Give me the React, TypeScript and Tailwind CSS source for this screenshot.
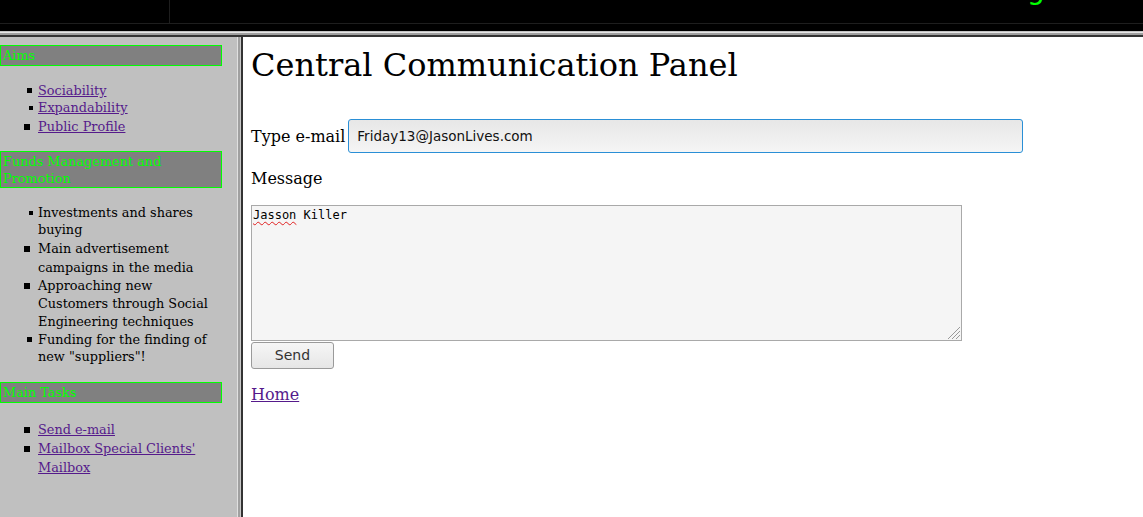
import React from "react";

type Line = { text: string; cls: string };
type Item = { bullet: string; lines: Line[]; link?: boolean };

const L17 = "h-[17px] leading-[17px]";
const L18 = "h-[18px] leading-[18px]";
const L19 = "h-[19px] leading-[19px]";

const B4 = "ml-[29px] w-[4px] h-[4px]";
const B5 = "ml-[27px] w-[5px] h-[5px]";
const B6 = "ml-[24px] w-[6px] h-[6px]";

function List({ items, className }: { items: Item[]; className: string }) {
  return (
    <ul className={className}>
      {items.map((it, i) => (
        <li key={i} className="flex">
          <div className="w-[38px] shrink-0">
            <div className={"flex items-center " + it.lines[0].cls}>
              <span className={"block bg-black " + it.bullet} />
            </div>
          </div>
          <div>
            {it.lines.map((l, j) => (
              <div key={j} className={"whitespace-nowrap " + l.cls}>
                {it.link ? (
                  <a href="#" className="text-[#551a8b] underline">
                    {l.text}
                  </a>
                ) : (
                  <span className="text-black">{l.text}</span>
                )}
              </div>
            ))}
          </div>
        </li>
      ))}
    </ul>
  );
}

function Heading({ lines, cls, extra }: { lines: string[]; cls: string; extra?: string }) {
  return (
    <div
      className={
        "w-[222px] border border-[#00ff00] bg-[#808080] pl-[2px] text-[#00ff00] " + (extra || "")
      }
    >
      {lines.map((l, i) => (
        <div key={i} className={"whitespace-nowrap " + cls}>
          {l}
        </div>
      ))}
    </div>
  );
}

export default function App() {
  const serif = { fontFamily: '"DejaVu Serif", "Liberation Serif", serif' };
  const sans = { fontFamily: '"DejaVu Sans", "Liberation Sans", sans-serif' };
  const mono = { fontFamily: '"DejaVu Sans Mono", "Liberation Mono", monospace' };

  const aims: Item[] = [
    { bullet: B5, lines: [{ text: "Sociability", cls: L17 }], link: true },
    { bullet: B4, lines: [{ text: "Expandability", cls: L18 }], link: true },
    { bullet: B6, lines: [{ text: "Public Profile", cls: L19 }], link: true },
  ];
  const funds: Item[] = [
    {
      bullet: B4,
      lines: [
        { text: "Investments and shares", cls: L17 },
        { text: "buying", cls: L18 },
      ],
    },
    {
      bullet: B6,
      lines: [
        { text: "Main advertisement", cls: L19 },
        { text: "campaigns in the media", cls: L19 },
      ],
    },
    {
      bullet: B6,
      lines: [
        { text: "Approaching new", cls: L18 },
        { text: "Customers through Social", cls: L18 },
        { text: "Engineering techniques", cls: L18 },
      ],
    },
    {
      bullet: B5,
      lines: [
        { text: "Funding for the finding of", cls: L17 },
        { text: 'new "suppliers"!', cls: L17 },
      ],
    },
  ];
  const tasks: Item[] = [
    { bullet: B6, lines: [{ text: "Send e-mail", cls: L19 }], link: true },
    {
      bullet: B6,
      lines: [
        { text: "Mailbox Special Clients'", cls: L19 },
        { text: "Mailbox", cls: L19 },
      ],
      link: true,
    },
  ];

  return (
    <div className="w-[1143px] h-[517px] overflow-hidden flex flex-col bg-white" style={serif}>
      {/* top frame */}
      <div className="relative h-[31px] shrink-0 bg-black overflow-hidden">
        <div className="flex h-[24px] border-b border-[#1e1e1e]">
          <div className="w-[170px] border-r border-[#1e1e1e]" />
        </div>
        <span
          className="absolute left-[1027px] top-[-24px] text-[28px] leading-[28px] text-[#00ff00]"
          style={sans}
        >
          g
        </span>
      </div>
      {/* horizontal frame border */}
      <div className="shrink-0 h-[1px] bg-[#c4c4c4]" />
      <div className="shrink-0 h-[1px] bg-[#e6e6e6]" />
      <div className="shrink-0 h-[2px] bg-[#a0a0a0]" />
      <div className="shrink-0 h-[2px] bg-[#333333]" />

      <div className="flex flex-1 min-h-0">
        {/* left frame */}
        <div className="w-[237px] shrink-0 bg-[#c0c0c0] pt-[8px] text-[12.85px]">
          <Heading lines={["Aims"]} cls={L19} />
          <List items={aims} className="mt-[16px]" />
          <Heading
            lines={["Funds Management and", "Promotion"]}
            cls={L17}
            extra="mt-[15px] pt-[1px]"
          />
          <List items={funds} className="mt-[16px]" />
          <Heading lines={["Main Tasks"]} cls={L19} extra="mt-[17px]" />
          <List items={tasks} className="mt-[17px]" />
        </div>
        {/* vertical frame border */}
        <div className="w-[1px] shrink-0 bg-[#e0e0e0]" />
        <div className="w-[2px] shrink-0 bg-[#a0a0a0]" />
        <div className="w-[1px] shrink-0 bg-[#c8c8c8]" />
        <div className="w-[2px] shrink-0 bg-[#333333]" />

        {/* main frame */}
        <div className="flex-1 pl-[8px] pt-[10px] text-black">
          <h1 className="text-[32px] leading-[37px] font-normal whitespace-nowrap">
            Central Communication Panel
          </h1>
          <div className="mt-[35px] flex items-center">
            <span className="text-[16px] leading-[19px]">Type e-mail</span>
            <div
              className="ml-[3px] w-[675px] h-[34px] flex items-center rounded-[3px] border border-[#2a8fd6] bg-gradient-to-b from-[#e7e7e7] to-[#f5f5f5] pl-[8px] text-[13.5px] text-[#111]"
              style={sans}
            >
              Friday13@JasonLives.com
            </div>
          </div>
          <div className="mt-[16px] text-[16px] leading-[19px]">Message</div>
          <div className="relative mt-[17px] w-[711px] h-[136px] border border-[#a9a9a9] bg-[#f5f5f5] pl-[1px] pt-[2px]">
            <div className="text-[12px] leading-[14px] text-black" style={mono}>
              <span className="underline decoration-wavy decoration-[#e02020] decoration-[1px] underline-offset-[2px]">
                Jasson
              </span>{" "}
              Killer
            </div>
            <svg
              className="absolute right-0 bottom-0"
              width="14"
              height="14"
              viewBox="0 0 14 14"
            >
              <line x1="13" y1="1" x2="1" y2="13" stroke="#9a9a9a" strokeWidth="1" />
              <line x1="13" y1="5" x2="5" y2="13" stroke="#9a9a9a" strokeWidth="1" />
              <line x1="13" y1="9" x2="9" y2="13" stroke="#9a9a9a" strokeWidth="1" />
            </svg>
          </div>
          <div
            className="mt-[1px] w-[83px] h-[27px] flex items-center justify-center rounded-[3px] border border-[#9a9a9a] bg-gradient-to-b from-[#f6f6f6] to-[#e6e6e6] text-[14px] text-[#333]"
            style={sans}
          >
            Send
          </div>
          <div className="mt-[16px] text-[16px] leading-[19px]">
            <a href="#" className="text-[#551a8b] underline">
              Home
            </a>
          </div>
        </div>
      </div>
    </div>
  );
}
